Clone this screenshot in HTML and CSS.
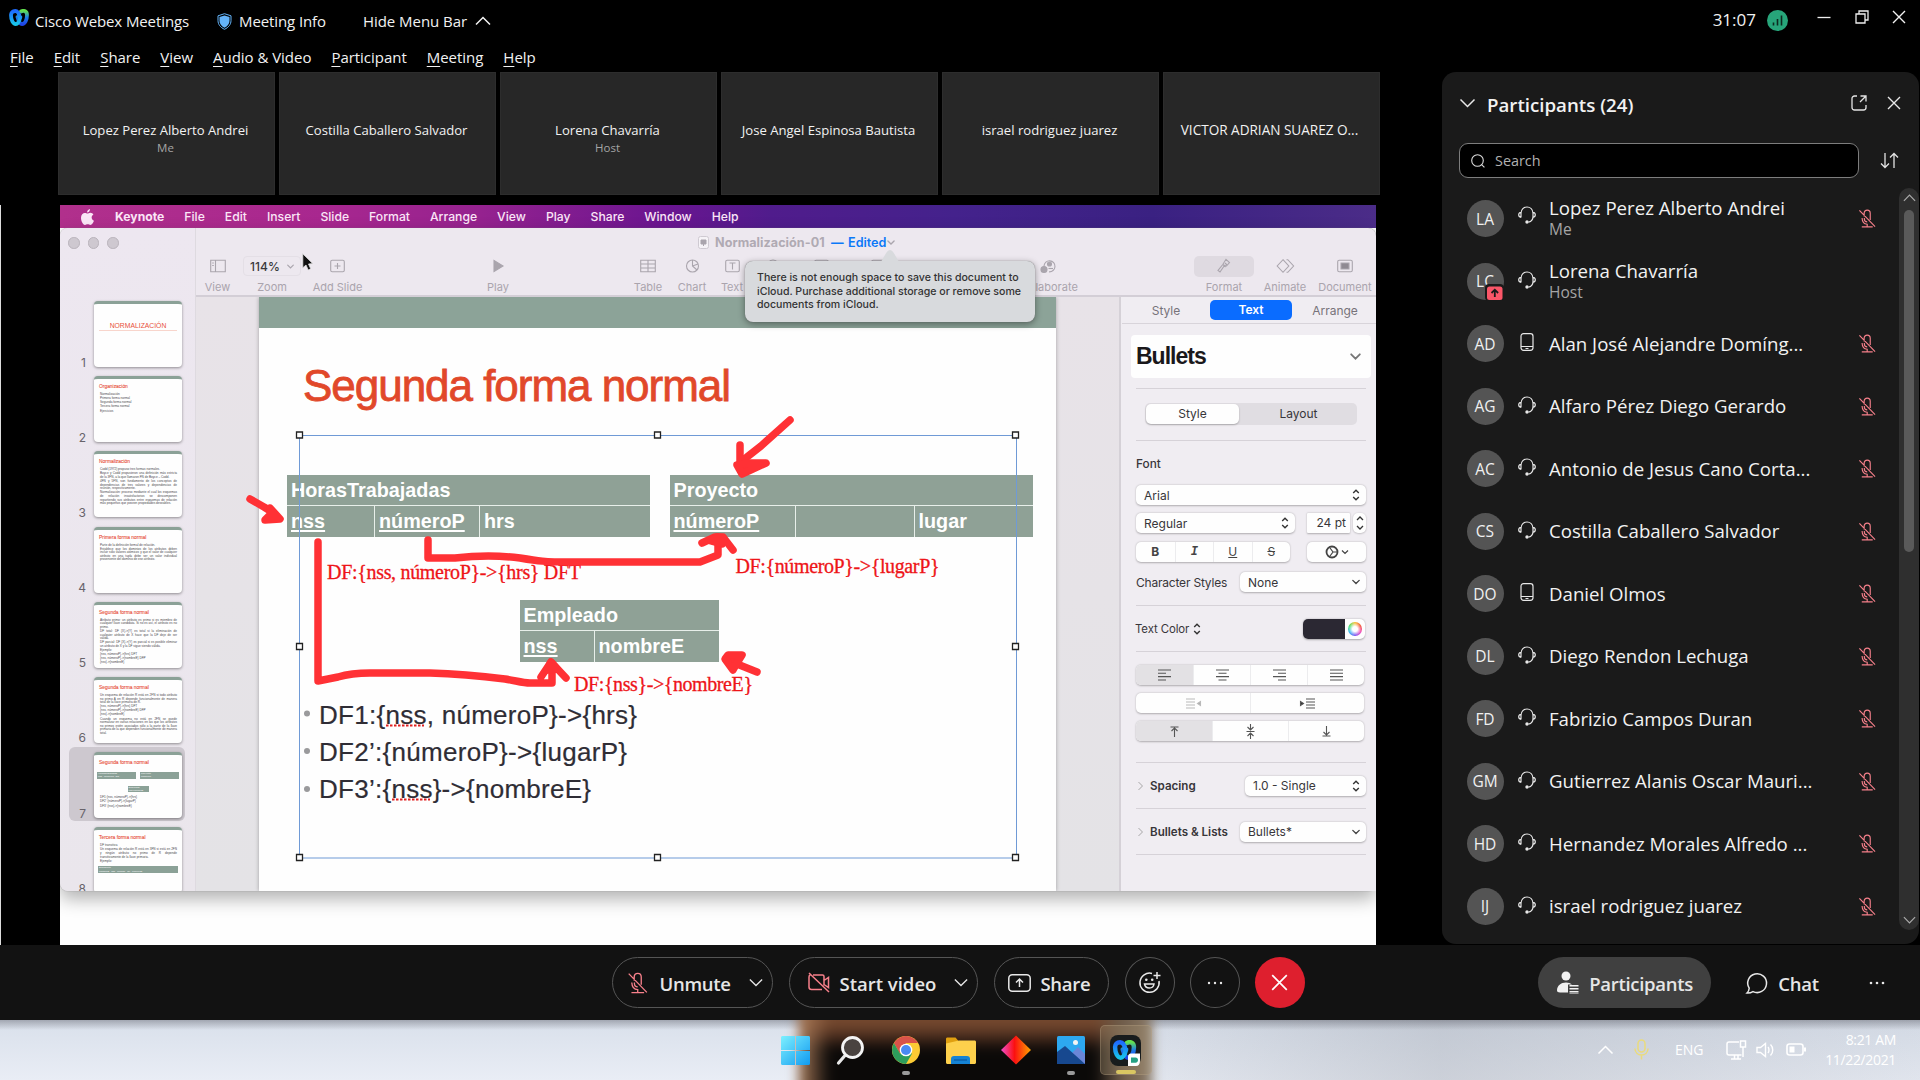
FILE: index.html
```html
<!DOCTYPE html>
<html lang="en">
<head>
<meta charset="utf-8">
<title>Cisco Webex Meetings</title>
<link rel="stylesheet" href="styles.css">
</head>
<body>
<svg class="defs" width="0" height="0">
  <defs>
    <symbol id="headset" viewBox="0 0 18 18"><path d="M3 11.5V7.2C3.2 3.400 5.800 1 9 1s5.800 2.400 6 6.200v3.300c0 3-1.800 5-4.500 5.700M3 6.300C1.500 6.500.7 7.500.7 8.800s.8 2.300 2.300 2.500M15 6.300c1.500.2 2.300 1.200 2.300 2.500s-.8 2.300-2.300 2.500" fill="none" stroke="#e8e8e8" stroke-width="1.2"/><circle cx="9" cy="16" r="1.700" fill="#e8e8e8"/></symbol>
    <symbol id="phone" viewBox="0 0 18 18"><rect x="3" y=".7" width="12" height="16.600" rx="2.500" fill="none" stroke="#e8e8e8" stroke-width="1.200"/><path d="M3 13.500h12M7.500 15.500h3" stroke="#e8e8e8" stroke-width="1"/></symbol>
    <symbol id="micoff" viewBox="0 0 18 20"><g fill="none" stroke="#f7808b" stroke-width="1.200"><path d="M6 8V4.500C6 2.500 7.300 1.200 9.200 1.200s3.200 1.300 3.200 3.300v7M6.200 9.500v1c0 1.800 1.200 3 3 3M3.800 9.500c.2 4 2.200 6.500 5.400 6.500M9.200 15.500v3.300M3.500 18.800H15M1 1.500l16.500 17"/></g></symbol>
    <symbol id="chev" viewBox="0 0 16 10"><path d="M1 1.500l7 7 7-7" fill="none" stroke="currentColor" stroke-width="1.500"/></symbol>
    <symbol id="chev-bold" viewBox="0 0 10 6.500"><path d="M1 1.200l4 4 4-4" fill="none" stroke="currentColor" stroke-width="1.700" stroke-linecap="round"/></symbol>
    <symbol id="updown" viewBox="0 0 8 12"><path d="M1.200 4L4 1.200 6.800 4M1.200 8L4 10.800 6.800 8" fill="none" stroke="#333" stroke-width="1.400"/></symbol>
    <symbol id="cross" viewBox="0 0 14 14"><path d="M1 1l12 12M13 1L1 13" stroke="currentColor" stroke-width="1.400"/></symbol>
    <linearGradient id="wx1" x1="0" y1="0" x2="0" y2="1"><stop offset="0" stop-color="#1e6cff"/><stop offset="1" stop-color="#18c4ea"/></linearGradient>
    <linearGradient id="wx2" x1="0" y1="0" x2="0" y2="1"><stop offset="0" stop-color="#63e04e"/><stop offset=".5" stop-color="#1b7ee8"/><stop offset="1" stop-color="#1f46e8"/></linearGradient>
    <symbol id="webex" viewBox="0 0 20 17"><g fill="none" stroke-width="3.800" stroke-linecap="round"><path d="M12 2.500c3-1.500 6-.3 6 3.500 0 5-2 9-5 9-2.500 0-3.500-3-4.500-7" stroke="url(#wx2)"/><path d="M11 9c-.8-4-2-7-4.700-7C3.500 2 2 3.500 2 6c0 5 2 9 4.800 9 2.400 0 3.600-3 4.600-7" stroke="url(#wx1)"/></g></symbol>
  </defs>
</svg>

<header class="titlebar">
  <svg class="logo" width="20" height="17"><use href="#webex"/></svg>
  <span class="app-name">Cisco Webex Meetings</span>
  <svg class="shield" width="15" height="17" viewBox="0 0 15 17"><path d="M7.500.7L14 2.800v4.700c0 4-2.500 7-6.500 8.800C3.500 14.500 1 11.500 1 7.500V2.800z" fill="none" stroke="#64b4fa" stroke-width="1"/><path d="M7.500 2.500l5 1.600v3.600c0 3-1.900 5.500-5 7-3.100-1.500-5-4-5-7V4.100z" fill="#64b4fa"/></svg>
  <span class="info">Meeting Info</span>
  <span class="hide">Hide Menu Bar</span>
  <svg class="hide-chev" width="16" height="10"><use href="#chev"/></svg>
  <div class="window-tools">
    <span class="clock">31:07</span>
    <svg class="signal" width="21" height="21" viewBox="0 0 21 21"><circle cx="10.500" cy="10.500" r="10.500" fill="#27a57a"/><path d="M6.500 12.500v3M10.500 9v6.500M14.500 5.500v10" stroke="#0c2a20" stroke-width="1.600"/></svg>
    <svg class="win-min" width="14" height="14" viewBox="0 0 14 14"><path d="M.5 7.500h13" stroke="#eee" stroke-width="1.300"/></svg>
    <svg class="win-max" width="14" height="14" viewBox="0 0 14 14"><path d="M1 4h9v9H1zM4 4V1h9v9h-3" fill="none" stroke="#eee" stroke-width="1.300"/></svg>
    <svg class="win-close" width="14" height="14"><use href="#cross"/></svg>
  </div>
</header>

<nav class="menubar">
  <span><u>F</u>ile</span><span><u>E</u>dit</span><span><u>S</u>hare</span><span><u>V</u>iew</span><span><u>A</u>udio &amp; Video</span><span><u>P</u>articipant</span><span><u>M</u>eeting</span><span><u>H</u>elp</span>
</nav>

<main class="meeting">
  <section class="content">
    <div class="filmstrip">
      <div class="tile"><b>Lopez Perez Alberto Andrei</b><small>Me</small></div>
      <div class="tile"><b>Costilla Caballero Salvador</b></div>
      <div class="tile"><b>Lorena Chavarría</b><small>Host</small></div>
      <div class="tile"><b>Jose Angel Espinosa Bautista</b></div>
      <div class="tile"><b>israel rodriguez juarez</b></div>
      <div class="tile"><b class="caps">VICTOR ADRIAN SUAREZ O...</b></div>
    </div>
    <div class="stage">
      <div class="share">
        <div class="macbar">
          <svg class="apple" width="13" height="16" viewBox="0 0 13 16"><path d="M9 0c.1 1.900-1.300 3.400-2.900 3.500C6 1.800 7.400.3 9 0zM6.500 4.600c.7 0 1.400-.8 2.900-.8 1.200 0 2.400.7 3 1.700-2.600 1.500-2.100 5.200.6 6.200-.6 1.700-2.100 4.200-3.600 4.200-1 0-1.500-.6-2.700-.6s-1.700.6-2.700.6C2 16 0 12 0 8.800 0 5.600 2 3.900 3.800 3.900c1.200 0 2 .7 2.700.7z" fill="#fbe6f7"/></svg>
          <b>Keynote</b><span>File</span><span>Edit</span><span>Insert</span><span>Slide</span><span>Format</span><span>Arrange</span><span>View</span><span>Play</span><span>Share</span><span>Window</span><span>Help</span>
        </div>
        <div class="keynote">
          <aside class="navigator">
            <div class="lights"><i></i><i></i><i></i></div>
            <ol class="thumbs">
              <li><em>1</em><div class="thumb cover"><h6>NORMALIZACIÓN</h6></div></li>
              <li><em>2</em><div class="thumb"><h5>Organización</h5><p>Normalización</p><p>Primera forma normal</p><p>Segunda forma normal</p><p>Tercera forma normal</p><p>Ejercicios</p></div></li>
              <li><em>3</em><div class="thumb"><h5>Normalización</h5><p>Codd (1972) propuso tres formas normales.</p><p>Boyce y Codd propusieron una definición más estricta de la 3FN, a la que llamaron FN de Boyce – Codd.</p><p>4FN y 5FN, son fundamento de los conceptos de dependencias de tres valores y dependencias de reunión, respectivamente.</p><p>Normalización: proceso mediante el cual los esquemas de relación insatisfactorios se descomponen repartiendo sus atributos entre esquemas de relación más pequeños que poseen propiedades deseables.</p></div></li>
              <li><em>4</em><div class="thumb"><h5>Primera forma normal</h5><p>Parte de la definición formal de relación.</p><p>Establece que los dominios de los atributos deben incluir sólo valores atómicos y que el valor de cualquier atributo en una tupla debe ser un valor individual proveniente del dominio de ese atributo.</p></div></li>
              <li><em>5</em><div class="thumb"><h5>Segunda forma normal</h5><p>Atributo primo: un atributo es primo si es miembro de cualquier llave candidata. Si no es así, el atributo es no primo.</p><p>DF total: DF {X}-&gt;{Y} es total si la eliminación de cualquier atributo de X hace que la DF deje de ser válida.</p><p>DF parcial: DF {X}-&gt;{Y} es parcial si es posible eliminar un atributo de X y la DF sigue siendo válida.</p><p>Ejemplo:</p><p>{nss, númeroP}-&gt;{hrs} DFT</p><p>{nss, númeroP}-&gt;{nombreE} DFP</p><p>{nss}-&gt;{nombreE}</p></div></li>
              <li><em>6</em><div class="thumb"><h5>Segunda forma normal</h5><p>Un esquema de relación R está en 2FN si todo atributo no primo A en R depende funcionalmente de manera total de la llave primaria de R.</p><p>{nss, númeroP}-&gt;{hrs} DFT</p><p>{nss, númeroP}-&gt;{nombreE} DFP</p><p>{nss}-&gt;{nombreE}</p><p>Cuando un esquema no está en 2FN se puede normalizar en varias relaciones en las que los atributos no primos estén asociados sólo a la parte de la llave primaria de la que dependen funcionalmente de manera total.</p></div></li>
              <li class="current"><em>7</em><div class="thumb"><h5>Segunda forma normal</h5><div class="mini-row"><span>HorasTrabajadas<br>nss &nbsp; númeroP &nbsp;hrs</span><span>Proyecto<br>númeroP</span></div><div class="mini-row mid"><span>Empleado<br>nss nombreE</span></div><p>DF1:{nss, númeroP}-&gt;{hrs}</p><p>DF2’:{númeroP}-&gt;{lugarP}</p><p>DF3’:{nss}-&gt;{nombreE}</p></div></li>
              <li><em>8</em><div class="thumb"><h5>Tercera forma normal</h5><p>DF transitiva</p><p>Un esquema de relación R está en 3FN si está en 2FN y ningún atributo no primo de R depende transitivamente de la llave primaria.</p><p>Ejemplo:</p><div class="mini-row wide"><span>EmpDepto<br>nombreE &nbsp; nss &nbsp; fechaN &nbsp; dir &nbsp; númeroD</span></div></div></li>
            </ol>
          </aside>
          <div class="editor">
            <div class="doc-title">
              <svg width="11" height="13" viewBox="0 0 11 13"><rect x=".5" y=".5" width="10" height="12" rx="2" fill="#f6f3f7" stroke="#cfcad2"/><path d="M3 4h5v4H3zM5.500 8v2" fill="#aaa5ad" stroke="#aaa5ad"/></svg>
              <b>Normalización-01</b><strong>—</strong><strong class="edited">Edited</strong><svg width="8" height="5"><use href="#chev-bold"/></svg>
            </div>
            <div class="toolbar">
              <div class="tool"><svg width="16" height="13" viewBox="0 0 16 13"><path d="M.7.7h14.600v11.600H.7zM5.500.7v11.600M2.200 3.500h1.600M2.200 6h1.600" /></svg><span>View</span></div>
              <div class="tool"><div class="zoombox">114%<svg width="7" height="5"><use href="#chev-bold"/></svg></div><span>Zoom</span></div>
              <div class="tool"><svg width="15" height="13" viewBox="0 0 15 13"><rect x=".7" y=".7" width="13.600" height="11.600" rx="1.500"/><path d="M7.500 3.500v6M4.500 6.500h6"/></svg><span>Add Slide</span></div>
              <i></i>
              <div class="tool"><svg width="11" height="13" viewBox="0 0 11 13"><path d="M1 1l9 5.500L1 12z" fill="#aaa5ad"/></svg><span>Play</span></div>
              <i></i>
              <div class="tool"><svg width="16" height="13" viewBox="0 0 16 13"><path d="M.7.7h14.600v11.600H.7zM.7 4.500h14.600M.7 8.500h14.600M8 .7v11.600"/></svg><span>Table</span></div>
              <div class="tool"><svg width="15" height="14" viewBox="0 0 15 14"><circle cx="7.500" cy="7" r="6"/><path d="M7.500 1v6l4.500 4M7.500 7L13 5"/></svg><span>Chart</span></div>
              <div class="tool"><svg width="15" height="13" viewBox="0 0 15 13"><rect x=".7" y=".7" width="13.600" height="11.600" rx="1.500"/><path d="M4.500 3.500h6M7.500 3.500v6.500"/></svg><span>Text</span></div>
              <div class="tool"><svg width="14" height="14" viewBox="0 0 14 14"><circle cx="7" cy="6" r="5"/></svg></div>
              <div class="tool"><svg width="15" height="13" viewBox="0 0 15 13"><rect x=".7" y=".7" width="13.600" height="11.600" rx="1.500"/></svg></div>
              <div class="tool"><svg width="15" height="13" viewBox="0 0 15 13"><rect x=".7" y=".7" width="13.600" height="11.600" rx="1.500"/></svg></div>
              <i></i>
              <div class="tool"><svg width="16" height="14" viewBox="0 0 16 14"><path d="M4 7a5.500 5.500 0 1 1 5 5.800"/><circle cx="9.500" cy="5" r="2" fill="#aaa5ad"/><circle cx="4" cy="10.500" r="3" fill="#aaa5ad"/><path d="M8.500 9.500h4.500"/></svg><span>Collaborate</span></div>
              <i></i>
              <div class="tool on"><svg width="14" height="15" viewBox="0 0 14 15"><path d="M9 .8L12.500 4 9.500 7.500l-2-.5L3 13.500 1 12l4.800-6zM8 4.500l2.500 2.500M6 6l2.500 2.500"/></svg><span>Format</span></div>
              <div class="tool"><svg width="19" height="15" viewBox="0 0 19 15"><path d="M7 1.200l5.800 6.300L7 13.800 1.200 7.500zM10.500 1.200h1.300l5.800 6.300-5.800 6.300h-1.300"/></svg><span>Animate</span></div>
              <div class="tool"><svg width="16" height="13" viewBox="0 0 16 13"><rect x=".7" y=".7" width="14.600" height="11.600" rx="1.500"/><path d="M4 3.500h8v6H4z" fill="#8f8a92"/></svg><span>Document</span></div>
              <svg class="cursor" width="12" height="19" viewBox="0 0 12 19"><path d="M.8.800v14l3.200-2.800 2.200 5 2.500-1.200L6.500 11l4.200-.4z" fill="#111" stroke="#ddd" stroke-width=".8"/></svg>
            </div>
            <div class="workspace">
              <div class="canvas">
                <div class="slide">
                  <div class="band"></div>
                  <div class="db db-horas"><div class="name">HorasTrabajadas</div><div class="cols"><u>nss</u><u>númeroP</u><span>hrs</span></div></div>
                  <div class="db db-proyecto"><div class="name">Proyecto</div><div class="cols"><u>númeroP</u><span></span><span>lugar</span></div></div>
                  <div class="db db-empleado"><div class="name">Empleado</div><div class="cols"><u>nss</u><span>nombreE</span></div></div>
                  <svg class="ink" width="827" height="594" viewBox="229 297 827 594">
                    <text class="title" x="303" y="400.500" textLength="428">Segunda forma normal</text>
                    <g class="bullet-text">
                      <circle cx="307" cy="713.500" r="3"/><circle cx="307" cy="751" r="3"/><circle cx="307" cy="789" r="3"/>
                      <text x="319" y="723.500" textLength="318">DF1:{nss, númeroP}-&gt;{hrs}</text>
                      <text x="319" y="760.800" textLength="308">DF2’:{númeroP}-&gt;{lugarP}</text>
                      <text x="319" y="798.300" textLength="272">DF3’:{nss}-&gt;{nombreE}</text>
                    </g>
                    <path d="M386 725.500h38M392 799.500h38" stroke="#e02020" stroke-width="2" stroke-dasharray="2.500 1.500"/>
                    <g fill="none" stroke="#6f9ad6" stroke-width="1"><rect x="299.500" y="435.500" width="717" height="422.500"/></g>
                    <g class="serif">
                      <text x="327" y="579" textLength="254">DF:{nss, númeroP}-&gt;{hrs} DFT</text>
                      <text x="735.500" y="573" textLength="204">DF:{númeroP}-&gt;{lugarP}</text>
                      <text x="574" y="690.500" textLength="179">DF:{nss}-&gt;{nombreE}</text>
                    </g>
                    <g class="marker">
                      <path d="M250 499l14 8 8 5"/>
                      <path class="head" d="M270 508l10 11-15 1 6-6z"/>
                      <path d="M318 542v139l20-4c10-3 20-4 32-4h60c30 1 50 3 75 6 12 2 18 4 25 4h22v-18M541 677l10-15 15 16"/>
                      <path class="head" d="M547 670l4-8 6 7z"/>
                      <path d="M428 540v18h27c25-3 50-2 65 0 18 3 25 4 50 4h130l18-7v-16M702 543l13-6 8 0 10 13"/>
                      <path class="head" d="M711 541l6-4 6 1-1 6z"/>
                      <path d="M790 420l-29 26-14 11-8 10M740 445v18"/>
                      <path class="head" d="M737 465l5 9 24-11-18 0z"/>
                      <path d="M757 672l-20-8"/>
                      <path class="head" d="M742 655l-14 0-3 4 8 11 4-7z"/>
                    </g>
                    <g fill="#fff" stroke="#222" stroke-width="1.300"><path d="M296.500 432h6v6h-6zM654.500 432h6v6h-6zM1012.500 432h6v6h-6zM296.500 643.500h6v6h-6zM1012.500 643.500h6v6h-6zM296.500 854.500h6v6h-6zM654.500 854.500h6v6h-6zM1012.500 854.500h6v6h-6z"/></g>
                  </svg>
                </div>
              </div>
              <aside class="inspector">
                <div class="tabs"><span>Style</span><span class="sel">Text</span><span>Arrange</span></div>
                <div class="para-style">Bullets<svg width="11" height="7"><use href="#chev-bold"/></svg></div>
                <div class="block seg-wrap"><div class="seg"><span class="sel">Style</span><span>Layout</span></div></div>
                <div class="block font">
                  <h4>Font</h4>
                  <div class="pop arial">Arial<svg width="8" height="12"><use href="#updown"/></svg></div>
                  <div class="line l2"><div class="pop regular">Regular<svg width="8" height="12"><use href="#updown"/></svg></div><div class="pt">24 pt</div><div class="stepper"><svg width="8" height="16" viewBox="0 0 8 16"><path d="M1 5l3-3 3 3M1 11l3 3 3-3" fill="none" stroke="#333" stroke-width="1.300"/></svg></div></div>
                  <div class="line l3"><div class="buttons bius"><b>B</b><span class="it">I</span><u>U</u><s>S</s></div><div class="pop gear"><svg width="24" height="14" viewBox="0 0 24 14"><g fill="none" stroke="#444" stroke-width="1.200"><circle cx="7" cy="7" r="5.500" stroke-width="1.800"/><path d="M5 3l3 4-3 4M8 7h4.500M17 5.500l3 3 3-3"/></g></svg></div></div>
                  <div class="line l4"><span>Character Styles</span><div class="pop none">None<svg width="8" height="6"><use href="#chev-bold"/></svg></div></div>
                </div>
                <div class="block color"><span>Text Color</span><svg width="8" height="12"><use href="#updown"/></svg><div class="swatch"><i></i><em></em></div></div>
                <div class="block align">
                  <div class="buttons four"><span class="sel"><svg width="13" height="12" viewBox="0 0 13 12"><path d="M0 1h13M0 4.300h8M0 7.600h13M0 11h8"/></svg></span><span><svg width="13" height="12" viewBox="0 0 13 12"><path d="M0 1h13M2.500 4.300h8M0 7.600h13M2.500 11h8"/></svg></span><span><svg width="13" height="12" viewBox="0 0 13 12"><path d="M0 1h13M5 4.300h8M0 7.600h13M5 11h8"/></svg></span><span><svg width="13" height="12" viewBox="0 0 13 12"><path d="M0 1h13M0 4.300h13M0 7.600h13M0 11h13"/></svg></span></div>
                  <div class="buttons two"><span class="dim"><svg width="15" height="11" viewBox="0 0 15 11"><path d="M0 1h9M0 4h9M0 7h9M0 10h9M14.500 3.500v4l-3-2z"/></svg></span><span><svg width="15" height="11" viewBox="0 0 15 11"><path d="M6 1h9M6 4h9M6 7h9M6 10h9M.5 3.500v4l3-2z"/></svg></span></div>
                  <div class="buttons three"><span class="sel"><svg width="9" height="11" viewBox="0 0 9 11"><path d="M.5 1h8M4.500 11V2M1.500 5l3-3 3 3" fill="none"/></svg></span><span><svg width="9" height="15" viewBox="0 0 9 15"><path d="M.5 7.500h8M4.500 0v6M4.500 15V9M1.500 3l3 3 3-3M1.500 12l3-3 3 3" fill="none"/></svg></span><span><svg width="9" height="11" viewBox="0 0 9 11"><path d="M.5 10h8M4.500 0v9M1.500 6l3 3 3-3" fill="none"/></svg></span></div>
                </div>
                <div class="block fold"><svg class="tri" width="9" height="6"><use href="#chev"/></svg><b>Spacing</b><div class="pop spacing">1.0 - Single<svg width="8" height="12"><use href="#updown"/></svg></div></div>
                <div class="block fold"><svg class="tri" width="9" height="6"><use href="#chev"/></svg><b>Bullets &amp; Lists</b><div class="pop none">Bullets*<svg width="8" height="6"><use href="#chev-bold"/></svg></div></div>
                <div class="block"></div>
              </aside>
            </div>
          </div>
          <div class="alert"><svg width="30" height="17" viewBox="0 0 30 17"><path d="M0 17c7 0 10-16 15-16s8 16 15 16z" fill="#d8dadd"/></svg><p>There is not enough space to save this document to<br>iCloud. Purchase additional storage or remove some<br>documents from iCloud.</p></div>
        </div>
      </div>
    </div>
  </section>

  <aside class="panel">
    <header>
      <svg class="fold-chev" width="17" height="10"><use href="#chev"/></svg><h2>Participants (24)</h2>
      <svg class="popout" width="16" height="16" viewBox="0 0 16 16"><path d="M6 1H3.500A2.500 2.500 0 0 0 1 3.500v9A2.500 2.500 0 0 0 3.500 15h9a2.500 2.500 0 0 0 2.500-2.500V10M9.500 1H15v5.500M15 1L9 7" fill="none" stroke="#e4e4e4" stroke-width="1.300"/></svg>
      <svg class="close" width="14" height="14"><use href="#cross"/></svg>
    </header>
    <div class="search-row">
      <div class="search"><svg width="14" height="14" viewBox="0 0 14 14"><circle cx="6.500" cy="6.500" r="5.800" fill="none" stroke="#ddd" stroke-width="1.100"/><path d="M10.600 10.600l2.800 2.800" stroke="#ddd" stroke-width="1.100"/></svg>Search</div>
      <svg width="19" height="17" viewBox="0 0 19 17"><path d="M5 1v14.500M1 11.500l4 4 4-4M14 16V1.500M10 5.500l4-4 4 4" fill="none" stroke="#e4e4e4" stroke-width="1.300"/></svg>
    </div>
    <div class="list-row">
      <ul class="people">
        <li><i>LA</i><svg class="dev up"><use href="#headset"/></svg><div class="duo"><b>Lopez Perez Alberto Andrei</b><small>Me</small></div><svg class="mic"><use href="#micoff"/></svg></li>
        <li><i>LC<svg class="sharing" width="19" height="17" viewBox="0 0 19 17"><rect width="19" height="17" rx="4" fill="#1a1a1a"/><rect x="2" y="2.500" width="15.500" height="13.500" rx="2.500" fill="#fb5668"/><path d="M9.800 13V6M6.500 9l3.300-3.300L13.100 9" fill="none" stroke="#1a1a1a" stroke-width="1.800"/></svg></i><svg class="dev lift"><use href="#headset"/></svg><div class="duo"><b>Lorena Chavarría</b><small>Host</small></div></li>
        <li><i>AD</i><svg class="dev lift"><use href="#phone"/></svg><div><b>Alan José Alejandre Domíng...</b></div><svg class="mic"><use href="#micoff"/></svg></li>
        <li><i>AG</i><svg class="dev lift"><use href="#headset"/></svg><div><b>Alfaro Pérez Diego Gerardo</b></div><svg class="mic"><use href="#micoff"/></svg></li>
        <li><i>AC</i><svg class="dev lift"><use href="#headset"/></svg><div><b>Antonio de Jesus Cano Corta...</b></div><svg class="mic"><use href="#micoff"/></svg></li>
        <li><i>CS</i><svg class="dev lift"><use href="#headset"/></svg><div><b>Costilla Caballero Salvador</b></div><svg class="mic"><use href="#micoff"/></svg></li>
        <li><i>DO</i><svg class="dev lift"><use href="#phone"/></svg><div><b>Daniel Olmos</b></div><svg class="mic"><use href="#micoff"/></svg></li>
        <li><i>DL</i><svg class="dev lift"><use href="#headset"/></svg><div><b>Diego Rendon Lechuga</b></div><svg class="mic"><use href="#micoff"/></svg></li>
        <li><i>FD</i><svg class="dev lift"><use href="#headset"/></svg><div><b>Fabrizio Campos Duran</b></div><svg class="mic"><use href="#micoff"/></svg></li>
        <li><i>GM</i><svg class="dev lift"><use href="#headset"/></svg><div><b>Gutierrez Alanis Oscar Mauri...</b></div><svg class="mic"><use href="#micoff"/></svg></li>
        <li><i>HD</i><svg class="dev lift"><use href="#headset"/></svg><div><b>Hernandez Morales Alfredo ...</b></div><svg class="mic"><use href="#micoff"/></svg></li>
        <li><i>IJ</i><svg class="dev lift"><use href="#headset"/></svg><div><b>israel rodriguez juarez</b></div><svg class="mic"><use href="#micoff"/></svg></li>
      </ul>
      <div class="scrollbar"><svg class="flip" width="13" height="8"><use href="#chev"/></svg><div class="knob"></div><svg width="13" height="8"><use href="#chev"/></svg></div>
    </div>
  </aside>
</main>

<footer class="controls">
  <div class="pill unmute"><svg width="21" height="22"><use href="#micoff"/></svg><span>Unmute</span><svg width="14" height="9"><use href="#chev"/></svg></div>
  <div class="pill video"><svg width="24" height="21" viewBox="0 0 24 21"><g fill="none" stroke="#f7808b" stroke-width="1.500"><path d="M6 3h9.500c1 0 1.500.5 1.500 1.500v9M15 17.500H4.500C3 17.500 2 16.500 2 15V5c0-1 .5-1.700 1.200-2M17 8.500l4.500-3v10L17 12.500M2 1l20 19"/></g></svg><span>Start video</span><svg width="14" height="9"><use href="#chev"/></svg></div>
  <div class="pill share-btn"><svg width="23" height="18" viewBox="0 0 23 18"><rect x=".8" y=".8" width="21.400" height="16.400" rx="3.500" fill="none" stroke="#e8e8e8" stroke-width="1.500"/><path d="M11.500 13V5.500M8 8.500l3.500-3.500L15 8.500" fill="none" stroke="#e8e8e8" stroke-width="1.500"/></svg><span>Share</span></div>
  <div class="round"><svg width="23" height="23" viewBox="0 0 23 23"><g fill="none" stroke="#e8e8e8" stroke-width="1.500"><path d="M14 2.400A9.600 9.600 0 1 0 21 10"/><path d="M6.500 13c.5 2.800 2.500 4 4.800 4s4.300-1.200 4.700-4zM19 1v7M15.500 4.500h7"/></g><circle cx="8.300" cy="8.800" r="1.300" fill="#e8e8e8"/><circle cx="14.200" cy="8.800" r="1.300" fill="#e8e8e8"/></svg></div>
  <div class="round"><svg width="16" height="4" viewBox="0 0 16 4"><g fill="#e8e8e8"><circle cx="2" cy="2" r="1.200"/><circle cx="8" cy="2" r="1.200"/><circle cx="14" cy="2" r="1.200"/></g></svg></div>
  <div class="round leave"><svg width="17" height="17"><use href="#cross"/></svg></div>
  <div class="pill people-btn"><svg width="22" height="23" viewBox="0 0 22 23"><g fill="#f2f2f2"><circle cx="9" cy="5" r="4.500"/><path d="M0 19.500C0 14.500 4 11.500 9 11.500c2.500 0 4.500.8 6 2h-4v8H3c-2 0-3-.8-3-2z"/><path d="M12.500 14h9v1.500h-9zM12.500 17h9v1.500h-9zM12.500 20h9v1.500h-9zM12.500 22.500h9v.5h-9z"/></g></svg><span>Participants</span></div>
  <div class="chat"><svg width="22" height="22" viewBox="0 0 22 22"><path d="M3.200 16.200A9.400 9.400 0 1 1 7 19.600c-1.700 1-3.800 1.600-6 1.400 1.300-1.200 2-2.800 2.200-4.800z" fill="none" stroke="#e8e8e8" stroke-width="1.500"/></svg><span>Chat</span></div>
  <svg class="more" width="16" height="4" viewBox="0 0 16 4"><g fill="#e8e8e8"><circle cx="2" cy="2" r="1.300"/><circle cx="8" cy="2" r="1.300"/><circle cx="14" cy="2" r="1.300"/></g></svg>
</footer>

<footer class="taskbar">
  <div class="wallpaper"></div>
  <div class="apps">
    <div class="app"><svg width="29" height="29" viewBox="0 0 29 29"><defs><linearGradient id="wn" gradientUnits="userSpaceOnUse" x1="0" y1="0" x2="29" y2="29"><stop offset="0" stop-color="#7df0ff"/><stop offset="1" stop-color="#109af0"/></linearGradient></defs><path d="M0 1.500C0 .6.600 0 1.500 0H14v14H0zM15 0h12.500c.9 0 1.500.6 1.500 1.500V14H15zM0 15h14v14H1.500C.6 29 0 28.400 0 27.500zM15 15h14v12.500c0 .9-.6 1.500-1.500 1.500H15z" fill="url(#wn)"/></svg></div>
    <div class="app"><svg width="28" height="29" viewBox="0 0 28 29"><path d="M8 19.500L1.500 27" stroke="#e8e8e8" stroke-width="3.200" stroke-linecap="round"/><circle cx="15.500" cy="11.500" r="10" fill="#4a4340" stroke="#f4f4f4" stroke-width="2.800"/></svg></div>
    <div class="app"><svg width="28" height="28" viewBox="0 0 28 28"><circle cx="14" cy="14" r="14" fill="#fccb34"/><path d="M1.900 7A14 14 0 0 1 26.100 7H14l-6.100 10.500z" fill="#d9534a"/><path d="M1.900 7A14 14 0 0 0 14 28l6.100-10.500H8z" fill="#2d9d5c"/><circle cx="14" cy="14" r="6.300" fill="#fff"/><circle cx="14" cy="14" r="5" fill="#4a8af4"/></svg><i class="dot"></i></div>
    <div class="app"><svg width="30" height="27" viewBox="0 0 30 27"><path d="M0 2c0-1 .6-1.500 1.500-1.500h8L12.500 4H28c1 0 2 .7 2 2v3H0z" fill="#e0a010"/><path d="M0 6.500L13 3.500h15.500c.9 0 1.500.6 1.500 1.500v20.500c0 .9-.6 1.500-1.500 1.500h-27C.6 27 0 26.400 0 25.500z" fill="#fdd04c"/><path d="M5 27v-5c0-2 1-3 3-3h13c2 0 3 1 3 3v5z" fill="#1583d5"/><path d="M8 23h13" stroke="#0b5ca5" stroke-width="1.300"/></svg></div>
    <div class="app"><svg width="30" height="30" viewBox="0 0 30 30"><defs><linearGradient id="dm"><stop offset="0" stop-color="#f04fd0"/><stop offset=".45" stop-color="#fb1010"/><stop offset="1" stop-color="#ffa400"/></linearGradient></defs><path d="M15 .5L30 15 15 29.500 0 15z" fill="url(#dm)"/></svg></div>
    <div class="app"><svg width="28" height="28" viewBox="0 0 28 28"><rect width="28" height="28" rx="1.500" fill="#2da8f0"/><path d="M13 19l8-8 7 7v10H13z" fill="#6a86d8"/><path d="M0 16l8-6 20 18H0z" fill="#17488f"/><circle cx="18.500" cy="6.500" r="2.500" fill="#f4f4f4"/></svg><i class="dot"></i></div>
    <div class="app active"><svg width="31" height="31" viewBox="0 0 31 31"><rect width="31" height="31" rx="8" fill="#181c1d"/><svg x="2" y="5" width="25" height="20"><use href="#webex"/></svg><path d="M18 31V22c0-2 1-3.500 3-3.500h9V26c0 3-1.500 5-4 5z" fill="#fff"/><path d="M21 22.500h4.500c1.500 0 2.500 1 2.500 2.500s-1 2.800-2.500 2.800H21z" fill="#24a184"/></svg><i class="bar"></i></div>
  </div>
  <div class="tray">
    <svg class="t-chev flip" width="17" height="10"><use href="#chev"/></svg>
    <svg class="t-mic" width="15" height="21" viewBox="0 0 15 21"><g fill="none" stroke="#eadb7c" stroke-width="1.500"><rect x="4" y="1" width="7" height="12" rx="3.500"/><path d="M1 9.500c0 4 2.800 6.500 6.500 6.500S14 13.500 14 9.500M7.500 16v4.500"/></g></svg>
    <span class="t-lang">ENG</span>
    <svg class="t-net" width="21" height="20" viewBox="0 0 21 20"><g fill="none" stroke="#fff" stroke-width="1.500"><path d="M13 2H3C1.800 2 1 2.800 1 4v9c0 1.200.8 2 2 2h12.500M5 19h10M8.500 15v4M12 15v4M14.500 1h5v6h-5zM17 7v10"/></g></svg>
    <svg class="t-vol" width="20" height="16" viewBox="0 0 20 16"><g fill="none" stroke="#fff" stroke-width="1.400"><path d="M1 5.500h3.500l5-4v13l-5-4H1zM12 5c1.300 1.500 1.300 4.500 0 6M14.500 2.500c3 3 3 8 0 11"/></g></svg>
    <svg class="t-bat" width="20" height="13" viewBox="0 0 20 13"><rect x="1" y="1" width="16" height="11" rx="2.500" fill="none" stroke="#fff" stroke-width="1.600"/><path d="M3.500 3.500h5v6h-5zM18 4.500h2v4h-2z" fill="#fff"/></svg>
    <div class="t-time"><span>8:21 AM</span><span>11/22/2021</span></div>
  </div>
</footer>
</body>
</html>
```
FILE: styles.css
```css
* { box-sizing: border-box; }
body { margin: 0; width: 1920px; height: 1080px; overflow: hidden; background: #000; color: #f2f2f2; font-family: "Open Sans", "Noto Sans", sans-serif; display: flex; flex-direction: column; }
svg { flex: none; display: block; overflow: visible; }
.defs { position: absolute; }
i, em { font-style: normal; }
h2, h4, h5, h6, p, ul, ol { margin: 0; padding: 0; }
li { list-style: none; }
.flip { transform: scaleY(-1); }

/* window chrome */
.titlebar { height: 44px; display: flex; align-items: center; font-size: 15px; letter-spacing: -.1px; padding-bottom: 2px; }
.logo { margin: -7px 6px 0 9px; }
.app-name { width: 153px; white-space: nowrap; }
.shield { margin: 0 7px 0 29px; }
.info { width: 88px; white-space: nowrap; }
.hide { margin-left: 36px; width: 112px; white-space: nowrap; letter-spacing: -.05px; }
.hide-chev { transform: scaleY(-1); }
.window-tools { margin-left: auto; display: flex; align-items: center; margin-right: 14px; padding-bottom: 2px; }
.clock { font-size: 17px; margin-right: 11px; letter-spacing: 0; margin-top: -1px; }
.signal { margin-right: 29px; }
.win-min { margin-right: 24px; }
.win-max { margin-right: 23px; }
.win-max, .win-min, .win-close { margin-top: -6px; }
.menubar { height: 28px; display: flex; gap: 20px; padding-left: 10px; font-size: 15px; line-height: 26px; letter-spacing: -.03px; }
.menubar u { text-underline-offset: 3px; }

/* meeting area */
.meeting { height: 873px; display: flex; }
.content { width: 1442px; display: flex; flex-direction: column; }
.filmstrip { margin-left: 58px; width: 1322px; height: 123px; display: flex; gap: 4px; }
.tile { flex: 1; background: #272727; border: 1px solid #2d2d2d; display: flex; flex-direction: column; align-items: center; padding: 47px 2px 0 0; }
.tile b { font-weight: 400; font-size: 13.100px; line-height: 20px; white-space: nowrap; }
.tile b.caps { font-size: 13.600px; letter-spacing: -.02px; margin-left: -2px; }
.tile small { font-size: 11.500px; line-height: 16px; color: #a5a5a5; }
.stage { margin-top: 10px; flex: 1; border-left: 1px solid #ddd; padding-left: 59px; }
.share { width: 1316px; height: 740px; background: #fefefe; font-family: Inter, "Liberation Sans", sans-serif; overflow: hidden; }
.macbar { height: 23px; display: flex; align-items: center; gap: 20px; padding-left: 21px; color: #fbe6f7; font-size: 12.200px; font-weight: 500; background: linear-gradient(90deg, #b1308c 0, #a8278f 20%, #95228f 32%, #6a1590 46%, #501c8c 54%, #44228c 68%, #3a2182 83%, #4b2c88 100%); }
.macbar .apple { margin-right: 1px; }
.macbar b { font-weight: 700; }
.keynote { position: relative; width: 1316px; height: 663px; display: flex; background: #ede8ef; border-radius: 8px; box-shadow: 0 8px 18px rgba(0,0,0,.3), 0 0 1px #888; color: #38363a; }

.navigator { width: 136px; flex: none; border-right: 1px solid #dedae0; overflow: hidden; border-radius: 8px 0 0 8px; background: linear-gradient(#ede7f0, #eae6ec); }
.lights { display: flex; gap: 8px; padding: 9px 0 0 8px; height: 73px; }
.lights i { width: 11.500px; height: 11.500px; border-radius: 50%; background: #cec8d0; border: 1px solid #b9b3bb; }
.thumbs li { height: 75.200px; margin: 0 9px; padding-left: 8px; display: flex; align-items: flex-start; }
.thumbs li.current { position: relative; }
.thumbs li.current::before { content: ""; position: absolute; inset: -5px 1px 6px 0; background: #cdc8cf; border-radius: 6px; }
.thumbs em { position: relative; width: 9px; text-align: right; font-size: 12px; line-height: 14px; margin: 54.500px 8px 0 0; color: #67636a; }
.thumb { position: relative; width: 88px; height: 66px; background: #fefefe; border-top: 3px solid #8ba197; border-radius: 4px; padding: 5px 5px 0 5px; box-shadow: 0 1px 3px rgba(0,0,0,.4); overflow: hidden; font-family: "Liberation Sans", sans-serif; }
.thumb h5 { font-size: 4.900px; line-height: 6px; margin-bottom: 3px; color: #e8503a; font-weight: 400; -webkit-text-stroke: .1px #e8503a; }
.thumb p { font-size: 3.100px; line-height: 3.600px; margin: 0 0 .5px 1px; text-align: justify; color: #4a484e; white-space: normal; }
.thumb h6 { font-size: 6.800px; font-weight: 400; color: #e8503a; margin-top: 13px; text-align: center; padding-bottom: 1px; border-bottom: 1px solid #f8d5cc; }
.mini-row { display: flex; justify-content: space-between; margin: 6px -2px 7px; font-size: 2.500px; line-height: 3.300px; color: #fff; }
.mini-row span { width: 39px; background: #8ba197; padding-left: 1px; white-space: nowrap; }
.mini-row.mid { justify-content: center; margin-bottom: 4px; }
.mini-row.mid span { width: 21px; }
.mini-row.wide { margin: 3px -1px; }
.mini-row.wide span { width: 100%; }

.editor { width: 1180px; display: flex; flex-direction: column; }
.doc-title { height: 28px; display: flex; align-items: center; padding-left: 502px; font-size: 12.600px; color: #b0aab3; }
.doc-title b { margin-left: 6px; width: 116px; letter-spacing: .05px; white-space: nowrap; }
.doc-title strong { color: #0b78f8; width: 17px; }
.doc-title .edited { font-weight: 600; width: 39px; }
.toolbar { position: relative; height: 41px; flex: none; display: grid; grid-template-columns: 43px 66px 65px 98px 60px 98px 44px 44px 36px 46px 50px 64px 98px 80px 106px 60px 62px 58px; border-bottom: 2px solid #d3ced6; }
.tool { display: flex; flex-direction: column; align-items: center; font-size: 11px; color: #aaa4ad; white-space: nowrap; }
.tool > svg { height: 20px; fill: none; stroke: #aaa5ad; stroke-width: 1.100; }
.tool > span { line-height: 14px; margin-top: 4px; }
.tool.on::before { content: ""; position: absolute; width: 60px; height: 21px; background: #dfdae1; border-radius: 5px; }
.tool.on > svg { position: relative; }
.zoombox { width: 58px; height: 20px; display: flex; align-items: center; justify-content: center; gap: 7px; color: #3a383c; font-size: 12px; font-weight: 500; border: 1px solid #e4dfe6; border-radius: 4px; }
.zoombox svg, .doc-title svg:last-child { color: #aaa5ad; }
.cursor { position: absolute; left: 106px; top: -3px; }
.workspace { flex: 1; display: flex; }
.canvas { width: 925px; background: linear-gradient(#e8e3e8, #e4e3e6); padding-left: 63px; overflow: hidden; border-right: 2px solid #d5d1d7; }
.slide { position: relative; width: 797px; height: 594px; background: #fefefe; box-shadow: 0 0 4px rgba(0,0,0,.3); }
.band { height: 31px; background: #8ca398; }
.ink { position: absolute; left: -30px; top: 0; }
.title { font: 44px "Liberation Sans", sans-serif; fill: #e1482a; stroke: #e1482a; stroke-width: .8; }
.bullet-text { font: 26px "Liberation Sans", sans-serif; fill: #2f2d35; stroke: #2f2d35; stroke-width: .2; }
.bullet-text circle { fill: #9a9a9c; stroke: none; }
.serif { font: 20px "Liberation Serif", serif; fill: #ee1418; stroke: #ee1418; stroke-width: .3; }
.marker { fill: none; stroke: #ff3135; stroke-width: 7.500; stroke-linecap: round; stroke-linejoin: round; }
.marker .head { fill: #ff3135; }
.db { position: absolute; height: 62px; background: #8fa196; color: #fff; font: bold 19.800px/30px "Liberation Sans", sans-serif; }
.db .name { height: 31px; padding-left: 4px; border-bottom: 1px solid #e8efea; }
.db .cols { display: grid; height: 31px; line-height: 31px; }
.db .cols > * { padding-left: 4px; border-left: 1px solid #e8efea; text-underline-offset: 2px; text-decoration-thickness: 1.500px; }
.db .cols > :first-child { border-left: 0; }
.db-horas { left: 28px; top: 178px; width: 363px; }
.db-horas .cols { grid-template-columns: 87px 105px 1fr; }
.db-proyecto { left: 410.500px; top: 178px; width: 363px; }
.db-proyecto .cols { grid-template-columns: 125px 119px 1fr; }
.db-empleado { left: 260.500px; top: 303px; width: 199px; }
.db-empleado .cols { grid-template-columns: 74px 1fr; }

/* format inspector */
.inspector { width: 255px; background: #f0edf2; font-size: 12px; padding-right: 10px; }
.tabs { height: 27px; display: grid; grid-template-columns: 88px 82px 1fr; align-items: center; text-align: center; color: #77737a; border-bottom: 1px solid #d8d4da; margin: 0 -12px 0 1px; }
.tabs .sel { background: #0a6cff; color: #fff; border-radius: 5px; height: 20px; line-height: 20px; font-weight: 600; }
.para-style { height: 43px; margin: 11px -5px 10px 10px; background: #fefefe; border-radius: 4px; display: flex; align-items: center; justify-content: space-between; padding: 0 10px 1px 5px; font: bold 23px "Liberation Sans", sans-serif; letter-spacing: -1px; color: #1a181b; }
.para-style svg { color: #777; }
.block { margin-left: 15px; border-top: 1px solid #d6d2d8; }
.seg-wrap { height: 52px; padding: 14px 9px; }
.seg { height: 22px; display: grid; grid-template-columns: 95px 1fr; background: #e0dde2; border-radius: 5px; text-align: center; line-height: 22px; }
.seg .sel { background: #fefefe; border-radius: 5px; margin: 1px; line-height: 20px; box-shadow: 0 1px 2px rgba(0,0,0,.25); }
.font { height: 165px; padding-top: 15px; }
.font h4 { font-size: 11.800px; font-weight: 500; line-height: 16px; margin-bottom: 13px; }
.pop, .buttons, .pt, .stepper { background: #fefefe; border-radius: 5px; height: 20px; box-shadow: 0 .5px 2px rgba(0,0,0,.28); }
.pop { display: flex; align-items: center; justify-content: space-between; padding: 0 6px 0 8px; }
.pop svg { color: #444; }
.line { display: flex; justify-content: space-between; align-items: center; }
.l2 { margin-top: 8px; }
.regular { width: 159px; }
.pt { width: 43px; border-radius: 1px; margin-left: 9px; line-height: 20px; text-align: right; padding-right: 4px; }
.stepper { width: 13px; display: flex; align-items: center; justify-content: center; }
.l3 { margin-top: 9px; }
.l4 { margin-top: 10px; }
.l4 > span { letter-spacing: -.2px; }
.buttons { display: grid; color: #444; text-align: center; line-height: 20px; }
.buttons > * + * { border-left: 1px solid #ececee; }
.bius { width: 154px; grid-template-columns: repeat(4, 1fr); }
.it { font-style: italic; font-family: "Liberation Mono", monospace; font-weight: 700; }
.gear { width: 59px; justify-content: center; padding: 0; }
.none { width: 126px; }
.color { height: 46px; display: flex; align-items: center; margin-left: 15px; }
.color > span { margin: 0 4px 0 -1px; font-size: 11.400px; letter-spacing: -.1px; }
.swatch { margin-left: auto; margin-right: 1px; width: 62px; height: 20px; background: #fefefe; border-radius: 5px; display: flex; overflow: hidden; box-shadow: 0 .5px 2px rgba(0,0,0,.3); }
.swatch i { width: 43px; background: #2b2833; }
.swatch em { width: 14px; height: 14px; margin: 3px; border-radius: 50%; background: radial-gradient(#fff 25%, transparent 65%), conic-gradient(#f9c33c, #f4553c, #f04fc0, #7c5cf5, #3cb8f5, #4be36a, #f9c33c); }
.align { height: 111px; padding: 13px 2px 0 0; display: flex; flex-direction: column; gap: 8px; }
.align .buttons > span { display: flex; align-items: center; justify-content: center; }
.align .sel { background: #e3e1e4; border-radius: 5px 0 0 5px; }
.align svg { stroke: #555; fill: #333; stroke-width: 1.100; }
.align .dim { opacity: .4; }
.four { grid-template-columns: repeat(4, 1fr); }
.two { grid-template-columns: repeat(2, 1fr); }
.three { grid-template-columns: repeat(3, 1fr); }
.fold { height: 46px; display: flex; align-items: center; }
.fold b { font-weight: 600; font-size: 11.600px; margin-left: 5px; white-space: nowrap; }
.fold .pop { margin-left: auto; }
.tri { transform: rotate(-90deg); color: #999; }
.spacing { width: 121px; }
.fold .none { width: 126px; }

/* storage warning */
.alert { position: absolute; left: 685px; top: 33px; width: 290px; height: 61px; background: #d8dadd; border-radius: 8px; box-shadow: 0 2px 7px rgba(0,0,0,.4), 0 0 1px #777; padding: 10px 12px; color: #333; }
.alert svg { position: absolute; left: 130px; top: -12px; }
.alert p { font-size: 10.600px; line-height: 13.600px; font-weight: 500; white-space: nowrap; }

/* participants panel */
.panel { width: 477px; height: 872px; background: #1a1a1a; border-radius: 14px; }
.panel > header { height: 71px; display: flex; align-items: center; padding: 0 18px 9px 17px; }
.panel h2 { font-size: 18.700px; font-weight: 600; letter-spacing: 0; margin: 2px 0 0 11px; }
.fold-chev, .panel .close { color: #e8e8e8; margin-top: -1px; }
.panel .popout { margin: -1px 20px 0 auto; }
.search-row { display: flex; align-items: center; padding: 0 20px 0 17px; justify-content: space-between; }
.search { width: 400px; height: 35px; border: 1px solid #7d7d7d; border-radius: 9px; background: #000; display: flex; align-items: center; gap: 10px; padding-left: 11px; font-size: 14.400px; color: #b2b2b2; }
.list-row { display: flex; margin-top: 9.500px; }
.people { width: 457px; }
.people li { height: 62.500px; display: flex; align-items: center; padding: 0 23px 0 24.500px; }
.people i { position: relative; width: 37px; height: 37px; border-radius: 50%; background: #545454; color: #f0f0f0; font-size: 15.500px; display: flex; align-items: center; justify-content: center; margin-right: 14.500px; }
.sharing { position: absolute; right: 0; bottom: -1px; }
.dev { width: 18px; height: 18px; margin-right: 13px; }
.dev.up { margin-top: -8px; }
.dev.lift { margin-top: -3px; }
.people li > div { display: flex; flex-direction: column; }
.people li > .duo { margin-bottom: 3px; }
.people b { font-weight: 400; font-size: 18.650px; line-height: 24px; white-space: nowrap; }
.people small { font-size: 15.500px; line-height: 18px; color: #a5a5a5; margin-top: 0; }
.mic { width: 18px; height: 19px; margin-left: auto; }
.scrollbar { width: 20px; height: 742px; background: #2f2f2f; border-radius: 10px; display: flex; flex-direction: column; align-items: center; padding: 6px 0; color: #aaa; }
.knob { width: 10px; height: 342px; background: #5a5a5a; border-radius: 5px; margin: 8px 0 auto; }

/* call controls */
.controls { height: 75px; background: #121212; display: flex; align-items: center; padding: 0 35px 0 611.500px; }
.pill { height: 51px; border: 1px solid #555; border-radius: 26px; display: flex; align-items: center; font-size: 18.500px; font-weight: 600; color: #e6e6e6; letter-spacing: -.3px; }
.controls .pill span, .chat span { padding-top: 1px; white-space: nowrap; }
.unmute { width: 161px; padding-left: 14px; margin-right: 16px; }
.unmute span { width: 89px; margin-left: 12px; }
.video { width: 189px; padding-left: 17px; margin-right: 16px; }
.video span { width: 114px; margin-left: 9px; letter-spacing: 0; }
.share-btn { width: 115px; padding-left: 13px; margin-right: 16px; }
.share-btn span { margin-left: 10px; }
.round { width: 50px; height: 51px; border-radius: 50%; border: 1px solid #555; display: flex; align-items: center; justify-content: center; margin-right: 15px; }
.leave { background: #de1f2e; border: 0; color: #fff; margin: 0; }
.people-btn { margin-left: auto; width: 173px; border: 0; background: #404040; padding-left: 19px; }
.people-btn span { margin-left: 10px; }
.chat { display: flex; align-items: center; font-size: 18.500px; font-weight: 600; letter-spacing: -.2px; color: #e6e6e6; margin: 0 50px 0 35px; }
.chat svg { margin-right: 10px; }

/* desktop taskbar */
.taskbar { position: relative; height: 60px; background: linear-gradient(90deg, transparent 55%, rgba(150,155,165,.35) 75%, rgba(150,155,165,.1)), linear-gradient(#d9e0eb, #e9edf5); overflow: hidden; display: flex; align-items: center; }
.taskbar::before { content: ""; position: absolute; left: 0; right: 0; top: 0; height: 10px; background: linear-gradient(rgba(60,60,70,.35), transparent); }
.wallpaper { position: absolute; left: 798px; top: -20px; width: 354px; height: 100px; border-radius: 10px 10px 0 0; filter: blur(6px); background: linear-gradient(90deg, #a87a58 0, rgba(168,122,88,0) 9%, rgba(116,98,79,0) 84%, #6d5b49 91%, #8b7a66 100%), linear-gradient(#75492f 24px, #4b2d1e 36px, #0b0908 50px); }
.apps { position: absolute; left: 770px; top: 5px; display: flex; gap: 3.500px; }
.app { position: relative; width: 51.500px; height: 50px; display: flex; align-items: center; justify-content: center; border-radius: 5px; }
.app.active { background: rgba(160,140,110,.35); border: 1px solid rgba(190,170,140,.3); }
.dot, .bar { position: absolute; bottom: 0; left: 22px; width: 8px; height: 4px; border-radius: 2px; background: #9a9a9a; }
.bar { width: 20px; left: 15px; background: #d9c662; }
.tray { margin-left: auto; display: flex; align-items: center; color: #fff; margin-right: 24px; padding-bottom: 1px; position: relative; }
.t-mic { margin-left: 20px; }
.t-lang { font-size: 14px; margin-left: 26px; width: 29px; }
.t-net { margin-left: 22px; }
.t-vol { margin-left: 9px; }
.t-bat { margin-left: 10px; }
.t-time { margin-left: 20px; display: flex; flex-direction: column; align-items: flex-end; font-size: 14px; line-height: 19.500px; width: 70px; white-space: nowrap; letter-spacing: -.35px; }
```
